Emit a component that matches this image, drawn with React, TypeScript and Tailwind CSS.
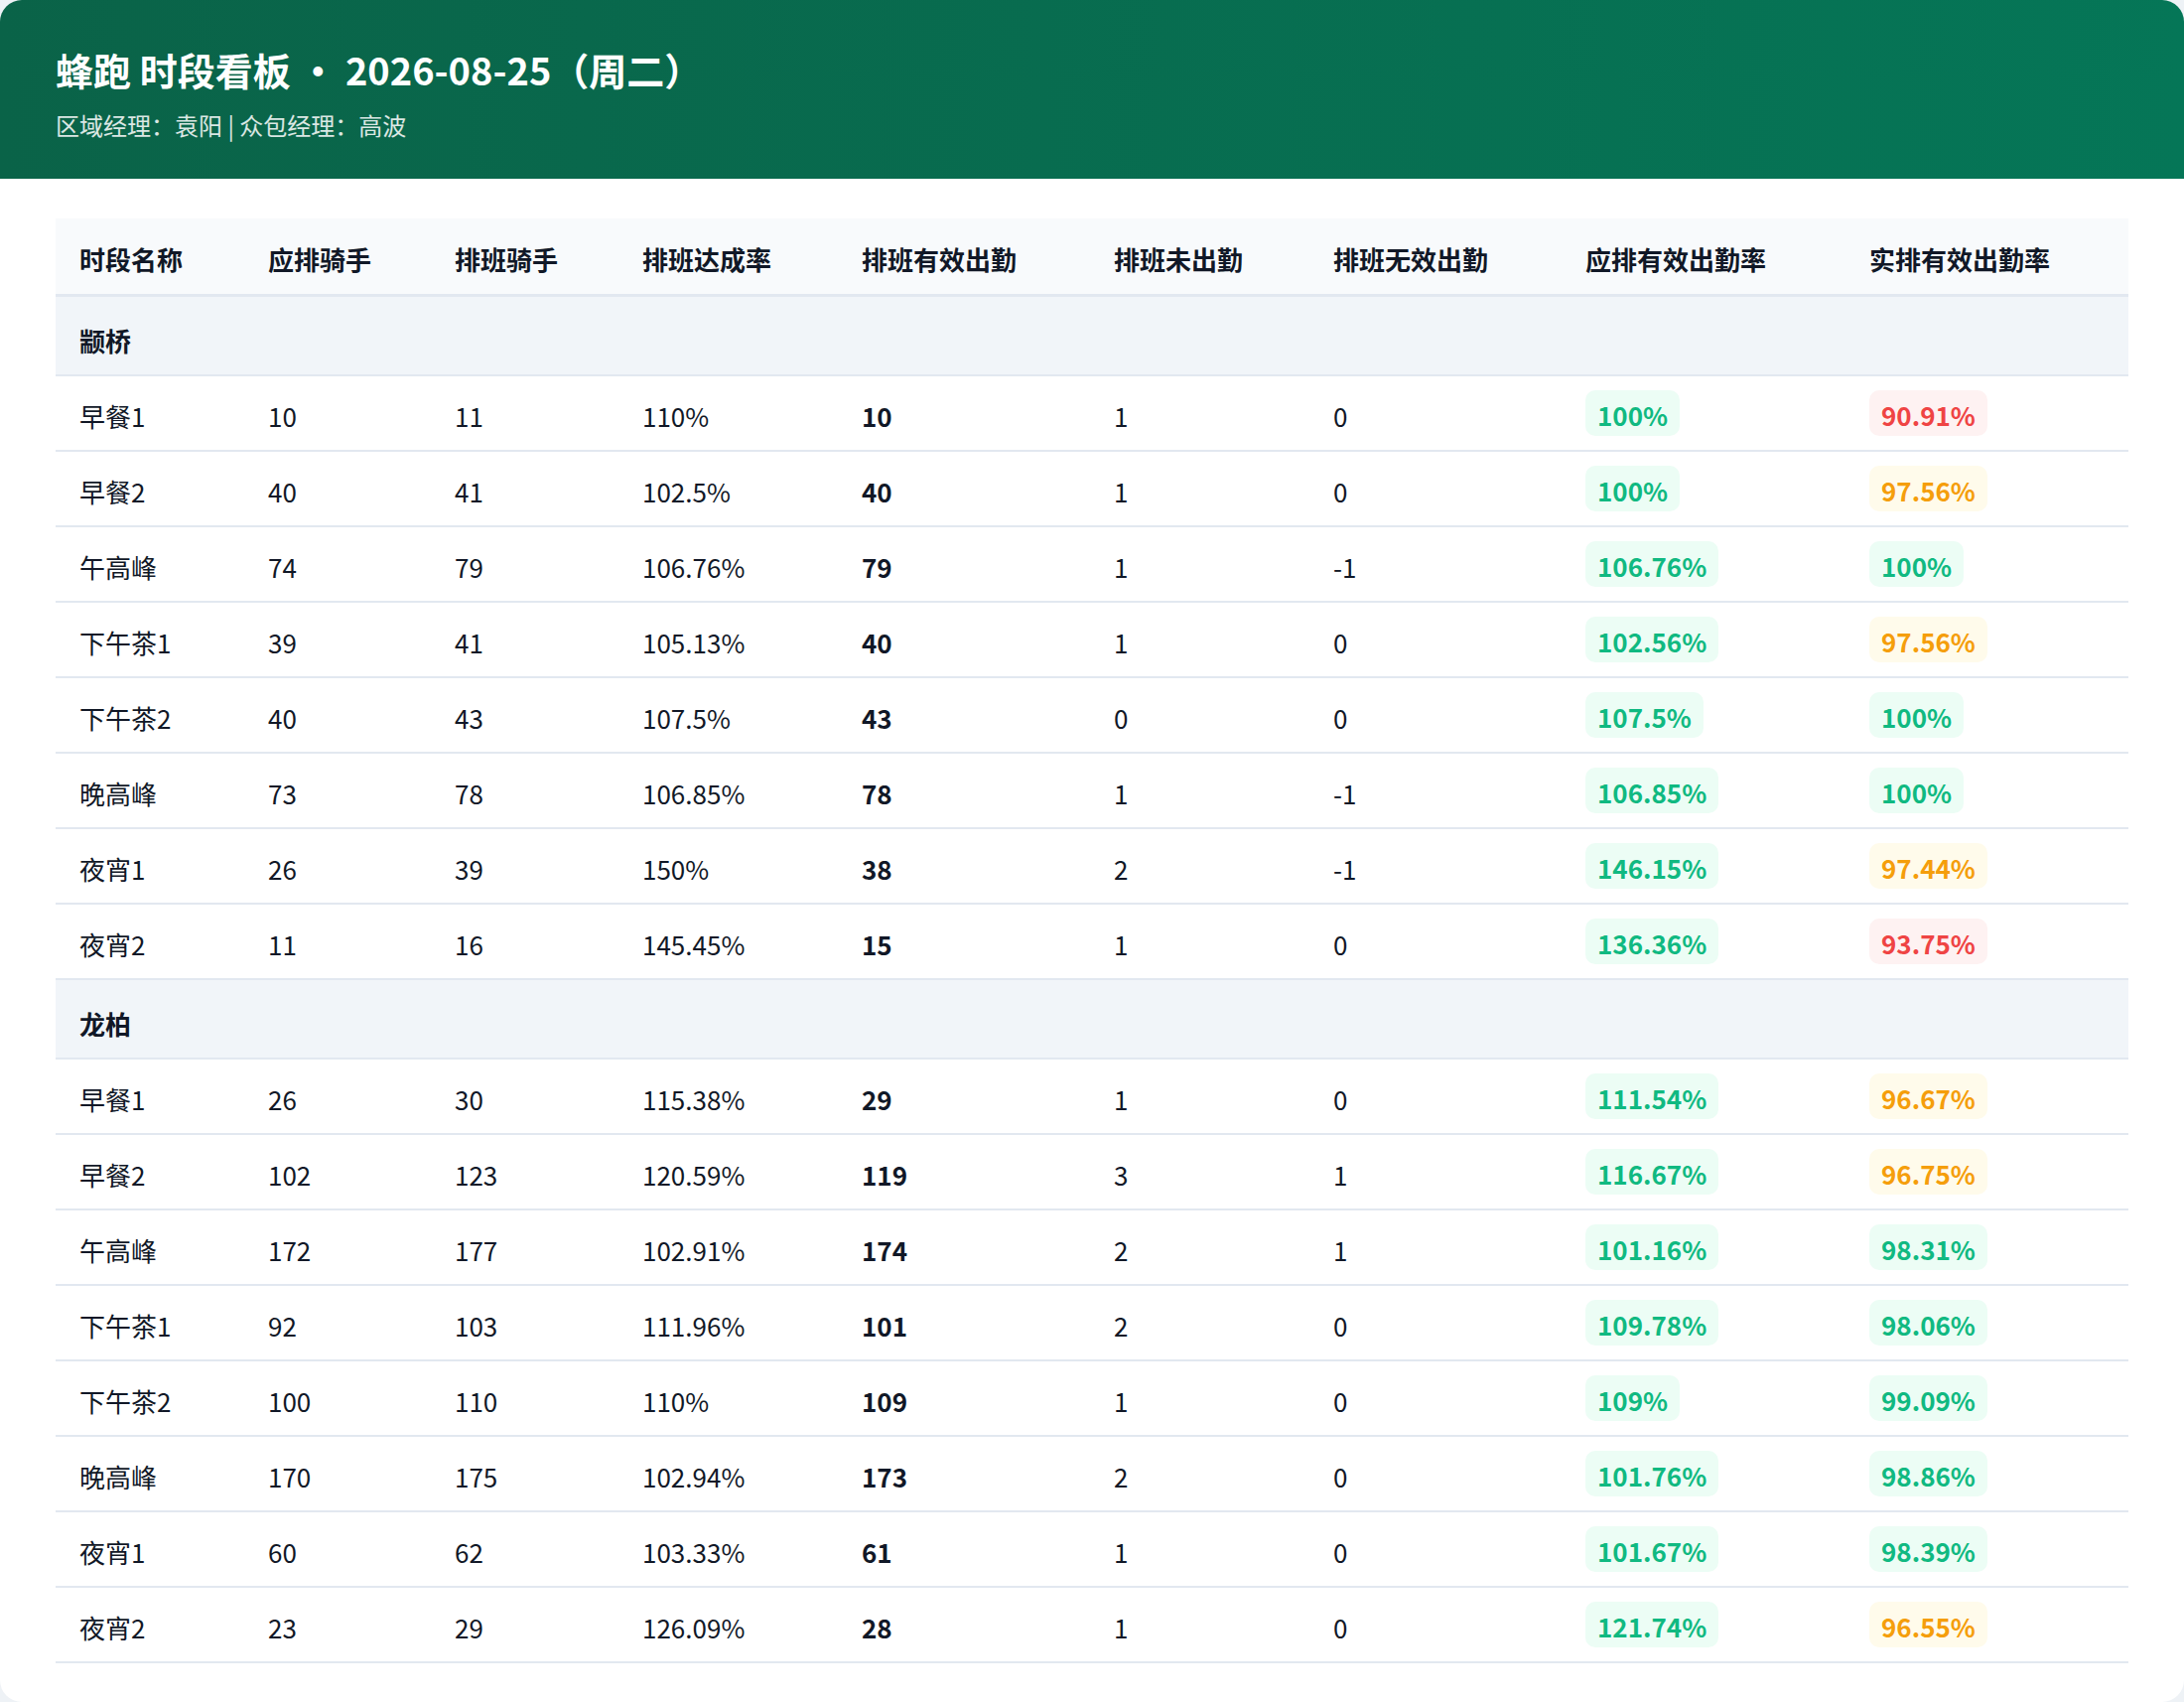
import React from 'react';

type Row = {
  name: string;
  plan: number;
  sched: number;
  rate: string;
  valid: number;
  absent: number;
  invalid: number;
  planRate: string;
  actualRate: string;
};

type Group = { area: string; rows: Row[] };

const r = (
  name: string,
  plan: number,
  sched: number,
  rate: string,
  valid: number,
  absent: number,
  invalid: number,
  planRate: string,
  actualRate: string
): Row => ({ name, plan, sched, rate, valid, absent, invalid, planRate, actualRate });

const groups: Group[] = [
  {
    area: '颛桥',
    rows: [
      r('早餐1', 10, 11, '110%', 10, 1, 0, '100%', '90.91%'),
      r('早餐2', 40, 41, '102.5%', 40, 1, 0, '100%', '97.56%'),
      r('午高峰', 74, 79, '106.76%', 79, 1, -1, '106.76%', '100%'),
      r('下午茶1', 39, 41, '105.13%', 40, 1, 0, '102.56%', '97.56%'),
      r('下午茶2', 40, 43, '107.5%', 43, 0, 0, '107.5%', '100%'),
      r('晚高峰', 73, 78, '106.85%', 78, 1, -1, '106.85%', '100%'),
      r('夜宵1', 26, 39, '150%', 38, 2, -1, '146.15%', '97.44%'),
      r('夜宵2', 11, 16, '145.45%', 15, 1, 0, '136.36%', '93.75%'),
    ],
  },
  {
    area: '龙柏',
    rows: [
      r('早餐1', 26, 30, '115.38%', 29, 1, 0, '111.54%', '96.67%'),
      r('早餐2', 102, 123, '120.59%', 119, 3, 1, '116.67%', '96.75%'),
      r('午高峰', 172, 177, '102.91%', 174, 2, 1, '101.16%', '98.31%'),
      r('下午茶1', 92, 103, '111.96%', 101, 2, 0, '109.78%', '98.06%'),
      r('下午茶2', 100, 110, '110%', 109, 1, 0, '109%', '99.09%'),
      r('晚高峰', 170, 175, '102.94%', 173, 2, 0, '101.76%', '98.86%'),
      r('夜宵1', 60, 62, '103.33%', 61, 1, 0, '101.67%', '98.39%'),
      r('夜宵2', 23, 29, '126.09%', 28, 1, 0, '121.74%', '96.55%'),
    ],
  },
];

const headers = [
  '时段名称',
  '应排骑手',
  '排班骑手',
  '排班达成率',
  '排班有效出勤',
  '排班未出勤',
  '排班无效出勤',
  '应排有效出勤率',
  '实排有效出勤率',
];

// column widths measured from the board
const cols = 'grid grid-cols-[190px_188px_189px_221px_254px_221px_254px_286px_285px]';

const Badge: React.FC<{ value: string }> = ({ value }) => {
  const n = parseFloat(value);
  // >=98 ok, >=95 warn, below is bad
  const tone =
    n >= 98
      ? 'bg-[#ecfdf5] text-[#10b981]'
      : n >= 95
        ? 'bg-[#fffbeb] text-[#f59e0b]'
        : 'bg-[#fef2f2] text-[#ef4444]';
  return (
    <span className={`inline-flex h-[46px] items-center rounded-[10px] px-[12px] pt-[2px] font-bold ${tone}`}>
      {value}
    </span>
  );
};

const Cell: React.FC<{ children: React.ReactNode; className?: string }> = ({ children, className = '' }) => (
  <div className={`flex items-center pl-[24px] ${className}`}>{children}</div>
);

export default function App() {
  return (
    <div
      className="w-[2200px] h-[1714px] bg-[#eef2f6] text-[#111827]"
      style={{ fontFamily: '"Noto Sans CJK SC", "Noto Sans", sans-serif' }}
    >
      <div className="h-full rounded-[22px] bg-white overflow-hidden">
        {/* Header */}
        <div className="h-[180px] bg-linear-to-r from-[#0a6348] to-[#057657] px-[56px] pt-[42px] text-white">
          <h1 className="text-[38px] font-bold leading-[56px]">蜂跑 时段看板 · 2026-08-25（周二）</h1>
          <div className="mt-[11px] text-[24px] leading-[34px] text-white/85">区域经理：袁阳 | 众包经理：高波</div>
        </div>

        {/* Table */}
        <div className="mx-[56px] mt-[40px]">
          <div className={`${cols} h-[79px] bg-[#f8fafc] border-b-[3px] border-[#e2e8f0] text-[26px] font-bold`}>
            {headers.map(h => (
              <Cell key={h} className="pt-[5px]">
                {h}
              </Cell>
            ))}
          </div>

          {groups.map(group => (
            <div key={group.area}>
              <div className="flex h-[80px] items-center bg-[#f1f5f9] border-b-2 border-[#e2e8f0] pl-[24px] pt-[8px] text-[26px] font-bold">
                {group.area}
              </div>
              {group.rows.map(row => (
                <div key={row.name} className={`${cols} h-[76px] border-b-2 border-[#e2e8f0] text-[26px]`}>
                  <Cell className="pt-[4px]">{row.name}</Cell>
                  <Cell className="pt-[4px]">{row.plan}</Cell>
                  <Cell className="pt-[4px]">{row.sched}</Cell>
                  <Cell className="pt-[4px]">{row.rate}</Cell>
                  <Cell className="pt-[4px] font-bold">{row.valid}</Cell>
                  <Cell className="pt-[4px]">{row.absent}</Cell>
                  <Cell className="pt-[4px]">{row.invalid}</Cell>
                  <Cell>
                    <Badge value={row.planRate} />
                  </Cell>
                  <Cell>
                    <Badge value={row.actualRate} />
                  </Cell>
                </div>
              ))}
            </div>
          ))}
        </div>
      </div>
    </div>
  );
}
